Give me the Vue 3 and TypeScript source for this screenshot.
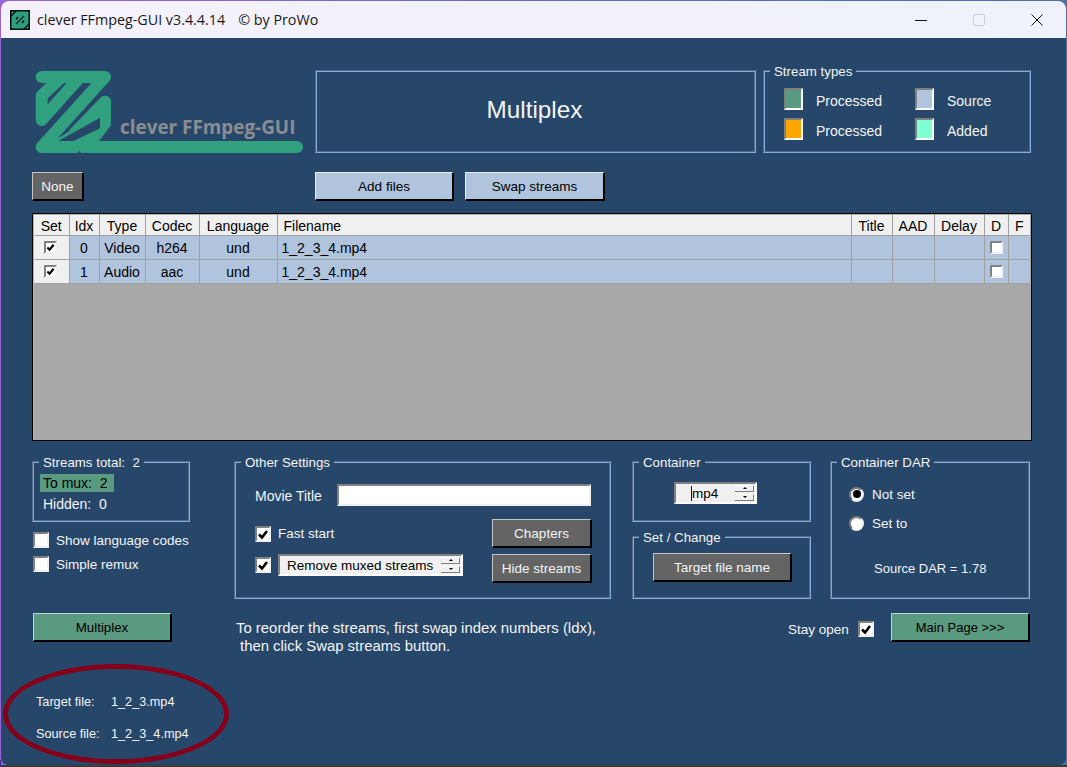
<script setup lang="ts">
interface Stream {
  idx: number
  type: string
  codec: string
  language: string
  filename: string
}

const columns: string[] = ['Set', 'Idx', 'Type', 'Codec', 'Language', 'Filename', 'Title', 'AAD', 'Delay', 'D', 'F']
const widths: number[] = [35, 30, 46, 54, 78, 574, 41, 42, 50, 24, 22]
const streams: Stream[] = [
  { idx: 0, type: 'Video', codec: 'h264', language: 'und', filename: '1_2_3_4.mp4' },
  { idx: 1, type: 'Audio', codec: 'aac', language: 'und', filename: '1_2_3_4.mp4' },
]
</script>

<template>
  <div class="desktop">
    <div class="window">
      <header class="titlebar">
        <svg class="app-icon" viewBox="0 0 20 20" aria-hidden="true">
          <rect width="20" height="20" fill="#0c0c0c" />
          <rect x="1.5" y="1.5" width="17" height="17" rx="1" fill="#2f9e7e" />
          <path d="M6 14 14 6" stroke="#12322a" stroke-width="1.4" fill="none" />
          <path d="M8 7 6 9.5M14 10.5 12 13" stroke="#0c0c0c" stroke-width="1.6" fill="none" />
          <path d="M1 6 6 1M14 19l5-5" stroke="#0c0c0c" stroke-width="1.4" fill="none" />
        </svg>
        <span class="app-name">clever FFmpeg-GUI v3.4.4.14</span>
        <span class="app-author">© by ProWo</span>
        <div class="controls">
          <span class="control">
            <svg width="12" height="12" viewBox="0 0 12 12"><path d="M0 6.5h12" stroke="#111" stroke-width="1" /></svg>
          </span>
          <span class="control">
            <svg width="12" height="12" viewBox="0 0 12 12"><rect x=".5" y=".5" width="11" height="11" rx="1.5" fill="none" stroke="#cfcfd2" /></svg>
          </span>
          <span class="control">
            <svg width="12" height="12" viewBox="0 0 12 12"><path d="M.5.5l11 11M11.5.5l-11 11" stroke="#111" stroke-width="1" /></svg>
          </span>
        </div>
      </header>

      <main class="content">
        <section class="top-row">
          <svg class="logo" viewBox="0 0 271 84" role="img">
            <g fill="none" stroke="#30a07f" stroke-width="12" stroke-linejoin="round" stroke-linecap="round">
              <path d="M9.7 7H73L9.7 77H40" />
              <path d="M29.7 7 9.7 25.7V50L48 7" />
              <path d="M73 31.7V53.3L54.7 77H265" />
              <path d="M73 31.7 42 64" />
            </g>
            <path d="M30 83H52L79 53V30L40 60 10 77Z" fill="#30a07f" />
            <path d="M26.3 71H41.3L68 58.3V47.7ZM45 84H50L47.5 81Z" fill="#27476a" />
            <text x="88" y="64" class="logo-text">clever FFmpeg-GUI</text>
          </svg>
          <div class="title-box">Multiplex</div>
          <div class="group stream-types">
            <span class="group-title">Stream types</span>
            <div class="legend-grid">
              <div class="legend-item"><i class="swatch swatch-green"></i><span class="legend-label">Processed</span></div>
              <div class="legend-item"><i class="swatch swatch-blue"></i><span class="legend-label">Source</span></div>
              <div class="legend-item"><i class="swatch swatch-orange"></i><span class="legend-label">Processed</span></div>
              <div class="legend-item"><i class="swatch swatch-aqua"></i><span class="legend-label">Added</span></div>
            </div>
          </div>
        </section>

        <section class="button-row">
          <button class="btn btn-dark btn-none">None</button>
          <button class="btn btn-light btn-add">Add files</button>
          <button class="btn btn-light btn-swap">Swap streams</button>
        </section>

        <section class="table-wrap">
          <table class="stream-table">
            <colgroup>
              <col v-for="(w, i) in widths" :key="i" :style="{ width: w + 'px' }" />
            </colgroup>
            <thead>
              <tr>
                <th v-for="c in columns" :key="c" :class="{ left: c === 'Filename' }">{{ c }}</th>
              </tr>
            </thead>
            <tbody>
              <tr v-for="s in streams" :key="s.idx">
                <td class="set-cell">
                  <span class="check check-small">
                    <svg viewBox="0 0 10 10"><path d="M1.5 5 4 7.5 8.5 2" fill="none" stroke="#000" stroke-width="2.4" /></svg>
                  </span>
                </td>
                <td>{{ s.idx }}</td>
                <td>{{ s.type }}</td>
                <td>{{ s.codec }}</td>
                <td>{{ s.language }}</td>
                <td class="left">{{ s.filename }}</td>
                <td></td>
                <td></td>
                <td></td>
                <td><span class="check check-small"></span></td>
                <td></td>
              </tr>
            </tbody>
          </table>
        </section>

        <section class="settings-row">
          <div class="col-a">
            <div class="group streams-box">
              <span class="group-title">Streams total:&nbsp; 2</span>
              <div class="to-mux">To mux:&nbsp; 2</div>
              <div class="hidden-count">Hidden:&nbsp; 0</div>
            </div>
            <label class="check-row first-check"><span class="check"></span>Show language codes</label>
            <label class="check-row"><span class="check"></span>Simple remux</label>
          </div>

          <div class="group other-settings">
            <span class="group-title">Other Settings</span>
            <div class="movie-row">
              <span class="movie-label">Movie Title</span>
              <span class="text-input"></span>
            </div>
            <div class="options">
              <div class="options-left">
                <label class="check-row fast-row">
                  <span class="check">
                    <svg viewBox="0 0 12 12"><path d="M2 6.5 5 9.5 10 3" fill="none" stroke="#000" stroke-width="2.6" /></svg>
                  </span>Fast start
                </label>
                <div class="remove-row">
                  <span class="check">
                    <svg viewBox="0 0 12 12"><path d="M2 6.5 5 9.5 10 3" fill="none" stroke="#000" stroke-width="2.6" /></svg>
                  </span>
                  <div class="spin spin-remove">
                    <span class="spin-text">Remove muxed streams</span>
                    <span class="spin-buttons">
                      <i class="arrow arrow-up"></i>
                      <i class="arrow arrow-down"></i>
                    </span>
                  </div>
                </div>
              </div>
              <div class="options-right">
                <button class="btn btn-dark btn-side">Chapters</button>
                <button class="btn btn-dark btn-side">Hide streams</button>
              </div>
            </div>
          </div>

          <div class="col-c">
            <div class="group container-box">
              <span class="group-title">Container</span>
              <div class="spin spin-container">
                <span class="spin-text"><span class="caret">mp4</span></span>
                <span class="spin-buttons">
                  <i class="arrow arrow-up"></i>
                  <i class="arrow arrow-down"></i>
                </span>
              </div>
            </div>
            <div class="group change-box">
              <span class="group-title">Set / Change</span>
              <button class="btn btn-dark btn-target">Target file name</button>
            </div>
          </div>

          <div class="group dar-box">
            <span class="group-title">Container DAR</span>
            <label class="radio-row"><span class="radio radio-on"></span>Not set</label>
            <label class="radio-row second-radio"><span class="radio"></span>Set to</label>
            <div class="source-dar">Source DAR = 1.78</div>
          </div>
        </section>

        <section class="action-row">
          <button class="btn btn-green btn-multiplex">Multiplex</button>
          <p class="hint">To reorder the streams, first swap index numbers (ldx),<br /><span class="hint-second">then click Swap streams button.</span></p>
          <label class="stay-open">
            Stay open
            <span class="check">
              <svg viewBox="0 0 12 12"><path d="M2 6.5 5 9.5 10 3" fill="none" stroke="#000" stroke-width="2.6" /></svg>
            </span>
          </label>
          <button class="btn btn-green btn-main">Main Page &gt;&gt;&gt;</button>
        </section>

        <section class="files">
          <div class="file-line"><span class="file-label">Target file:</span>1_2_3.mp4</div>
          <div class="file-line"><span class="file-label">Source file:</span>1_2_3_4.mp4</div>
        </section>
      </main>

      <div class="annotation"></div>
    </div>
  </div>
</template>

<style>
html,
body {
  margin: 0;
  background: #333;
}
</style>

<style scoped>
.desktop {
  width: 1067px;
  height: 767px;
  box-sizing: border-box;
  padding: 1px 1px 2px 1px;
  overflow: hidden;
  background:
    linear-gradient(to bottom, transparent 760px, #3a2a90 760px) left / 1px 100% no-repeat,
    linear-gradient(to bottom, transparent 765px, #3a3a3a 765px),
    linear-gradient(to right, #9a64d6, #4f6fb8 75%, #54709f);
  font-family: "Liberation Sans", Arial, sans-serif;
  font-size: 13.5px;
  color: #f4f4f4;
}

.window {
  position: relative;
  width: 1065px;
  height: 764px;
  background: #27476a;
  border-radius: 8px 8px 7px 7px;
  overflow: hidden;
}

.titlebar {
  display: flex;
  align-items: center;
  height: 37px;
  padding-left: 9px;
  background: linear-gradient(to right, #f4f1fa, #eff2fa);
  color: #1a1a1a;
  font-family: "Open Sans", "Noto Sans", sans-serif;
  font-size: 14.3px;
}

.app-icon {
  width: 20px;
  height: 20px;
  margin-right: 7px;
}

.app-author {
  margin-left: 13px;
}

.controls {
  display: flex;
  margin-left: auto;
}

.control {
  display: flex;
  align-items: center;
  justify-content: center;
  width: 58px;
  height: 37px;
}

.content {
  padding: 32px 0 0 31px;
}

.top-row {
  display: flex;
  height: 83px;
}

.logo {
  width: 271px;
  height: 84px;
  margin-right: 12px;
  flex: none;
}

.logo-text {
  font-family: "Open Sans", sans-serif;
  font-weight: 700;
  font-size: 18.9px;
  fill: #8b8d90;
}

.title-box {
  display: flex;
  align-items: center;
  justify-content: center;
  width: 441px;
  box-sizing: border-box;
  padding: 0 2px 3px 0;
  border: 2px groove #86acdd;
  font-size: 24.3px;
  margin-right: 7px;
}

.group {
  position: relative;
  box-sizing: border-box;
  border: 2px groove #86acdd;
}

.group-title {
  position: absolute;
  top: -9px;
  left: 5px;
  padding: 0 4px;
  background: #27476a;
  font-size: 13.3px;
  line-height: 17px;
  white-space: nowrap;
}

.stream-types {
  width: 268px;
  padding: 16px 0 0 19px;
}

.legend-grid {
  display: grid;
  grid-template-columns: 131px 1fr;
  row-gap: 8px;
}

.legend-item {
  display: flex;
  align-items: center;
  height: 22px;
  font-size: 14px;
}

.legend-label {
  margin-top: 4px;
}

.swatch {
  width: 19px;
  height: 22px;
  box-sizing: border-box;
  margin-right: 13px;
  border: 2px solid;
  border-color: #808080 #fff #fff #808080;
}

.swatch-green {
  background: #5a9a80;
}

.swatch-blue {
  background: #b0c4de;
}

.swatch-orange {
  background: #ffa500;
}

.swatch-aqua {
  background: #7fffd4;
}

.button-row {
  display: flex;
  margin-top: 19px;
}

.btn {
  display: block;
  box-sizing: border-box;
  height: 29px;
  padding: 0;
  border-style: solid;
  border-width: 1px 2px 2px 1px;
  font: inherit;
}

.btn-dark {
  background: #646464;
  color: #f4f4f4;
  border-color: #c4c4c4 #000 #000 #c4c4c4;
}

.btn-light {
  background: #b0c4de;
  color: #000;
  border-color: #e6edf6 #000 #000 #e6edf6;
}

.btn-green {
  background: #5a9a80;
  color: #000;
  border-color: #b8d8ca #000 #000 #b8d8ca;
}

.btn-none {
  width: 52px;
  margin-right: 231px;
}

.btn-add {
  width: 139px;
  margin-right: 11px;
}

.btn-swap {
  width: 140px;
}

.table-wrap {
  box-sizing: border-box;
  width: 1000px;
  height: 228px;
  margin-top: 12px;
  padding: 1px 1px 0;
  border: 1px solid #000;
  box-shadow: inset 1px 1px 0 #b4b4b4;
  background: #a9a9a9;
}

.stream-table {
  table-layout: fixed;
  width: 996px;
  border-collapse: collapse;
  color: #000;
  font-size: 14px;
}

.stream-table th,
.stream-table td {
  padding: 0;
  text-align: center;
  font-weight: 400;
  border: 1px solid #a0a0a0;
  border-top: none;
}

.stream-table tr > *:first-child {
  border-left: none;
}

.stream-table tr > *:last-child {
  border-right: none;
}

.stream-table th {
  box-sizing: border-box;
  height: 20px;
  line-height: 15px;
  padding-top: 3px;
  background: #f0f0f0;
}

.stream-table td {
  height: 22px;
  padding-top: 1px;
  background: #b0c4de;
}

.stream-table .left {
  text-align: left;
  padding-left: 4px;
}

.stream-table th.left {
  padding-left: 6px;
}

.stream-table .set-cell {
  padding-right: 2px;
  background: #f0f0f0;
}

.check {
  display: inline-flex;
  flex: none;
  width: 16px;
  height: 16px;
  box-sizing: border-box;
  background: #fff;
  border: 2px solid;
  border-color: #808080 #f0f0f0 #f0f0f0 #808080;
}

.check-small {
  width: 13px;
  height: 13px;
  margin-top: -2px;
  vertical-align: middle;
}

.check svg {
  width: 100%;
  height: 100%;
}

.settings-row {
  display: flex;
  margin-top: 20px;
}

.col-a {
  width: 202px;
}

.streams-box {
  width: 158px;
  height: 61px;
}

.to-mux {
  width: 74px;
  height: 18px;
  margin: 11px 0 0 6px;
  padding-left: 3px;
  box-sizing: border-box;
  background: #5a9a80;
  color: #000;
  font-size: 14px;
  line-height: 18px;
}

.hidden-count {
  margin: 4px 0 0 9px;
  font-size: 14px;
  line-height: 17px;
}

.check-row {
  display: flex;
  align-items: center;
  gap: 7px;
}

.first-check {
  margin: 10px 0 8px 1px;
}

.col-a .check-row + .check-row {
  margin-left: 1px;
}

.other-settings {
  width: 377px;
  height: 138px;
  padding: 21px 0 0 19px;
}

.movie-row {
  display: flex;
  align-items: center;
  height: 22px;
}

.movie-label {
  width: 82px;
  margin-top: 2px;
  font-size: 14px;
}

.text-input {
  width: 254px;
  height: 22px;
  box-sizing: border-box;
  background: #fff;
  border: 2px solid;
  border-color: #808080 #f0f0f0 #f0f0f0 #808080;
}

.options {
  display: flex;
  margin-top: 13px;
}

.options-left {
  width: 237px;
}

.fast-row {
  height: 29px;
}

.remove-row {
  display: flex;
  align-items: center;
  gap: 7px;
  height: 22px;
  margin-top: 6px;
}

.options-right {
  display: flex;
  flex-direction: column;
  gap: 6px;
}

.btn-side {
  width: 100px;
}

.spin {
  display: flex;
  align-items: center;
  box-sizing: border-box;
  height: 22px;
  background: #f0f0f0;
  border: 2px solid;
  border-color: #808080 #fff #fff #808080;
  color: #000;
}

.spin-text {
  flex: 1;
}

.spin-buttons {
  display: flex;
  flex-direction: column;
  gap: 2px;
  width: 19px;
  margin-right: 1px;
}

.arrow {
  position: relative;
  display: block;
  background: #f0f0f0;
  border-right: 1px solid #808080;
  border-bottom: 1px solid #808080;
  border-top: 1px solid #fff;
  height: 5px;
}

.arrow::after {
  content: "";
  position: absolute;
  left: 8px;
  top: 1px;
  border-left: 2px solid transparent;
  border-right: 2px solid transparent;
}

.arrow-up::after {
  border-bottom: 2px solid #000;
}

.arrow-down::after {
  border-top: 2px solid #000;
}

.spin-remove {
  width: 185px;
  padding-left: 7px;
}

.spin-container {
  width: 83px;
  margin: 19px 0 0 40px;
}

.spin-container .spin-text {
  padding-left: 15px;
}

.caret {
  border-left: 1px solid #200060;
}

.col-c {
  display: flex;
  flex-direction: column;
  gap: 14px;
  width: 179px;
  margin-left: 21px;
}

.container-box {
  height: 61px;
}

.change-box {
  height: 63px;
  padding: 15px 0 0 19px;
}

.btn-target {
  width: 139px;
}

.dar-box {
  width: 200px;
  height: 138px;
  margin-left: 19px;
  padding: 23px 0 0 17px;
}

.radio-row {
  display: flex;
  align-items: center;
  gap: 8px;
  height: 16px;
}

.second-radio {
  margin-top: 13px;
}

.radio {
  position: relative;
  flex: none;
  width: 15px;
  height: 15px;
  box-sizing: border-box;
  border-radius: 50%;
  background: #fff;
  border: 2px solid;
  border-color: #808080 #f0f0f0 #f0f0f0 #808080;
}

.radio-on::after {
  content: "";
  position: absolute;
  inset: 1.5px;
  border-radius: 50%;
  background: #000;
}

.source-dar {
  margin: 30px 0 0 25px;
  font-size: 13px;
}

.action-row {
  display: flex;
  align-items: flex-start;
  margin-top: 14px;
}

.btn-multiplex {
  width: 139px;
  margin-left: 1px;
  font-size: 13.3px;
}

.hint {
  margin: 6px 0 0 64px;
  width: 552px;
  flex: none;
  font-size: 14.9px;
  line-height: 18px;
}

.hint-second {
  margin-left: 4px;
}

.stay-open {
  display: flex;
  align-items: center;
  gap: 9px;
  flex: none;
  width: 103px;
  height: 16px;
  margin-top: 8px;
}

.btn-main {
  width: 139px;
  font-size: 13px;
}

.files {
  margin-top: 38px;
  margin-left: 4px;
  font-size: 12.7px;
}

.file-line {
  display: flex;
  height: 32px;
  line-height: 18px;
}

.file-label {
  width: 75px;
}

.annotation {
  position: absolute;
  left: 2px;
  top: 663px;
  width: 226px;
  height: 100px;
  box-sizing: border-box;
  border: 5px solid #850018;
  border-radius: 50%;
}
</style>
